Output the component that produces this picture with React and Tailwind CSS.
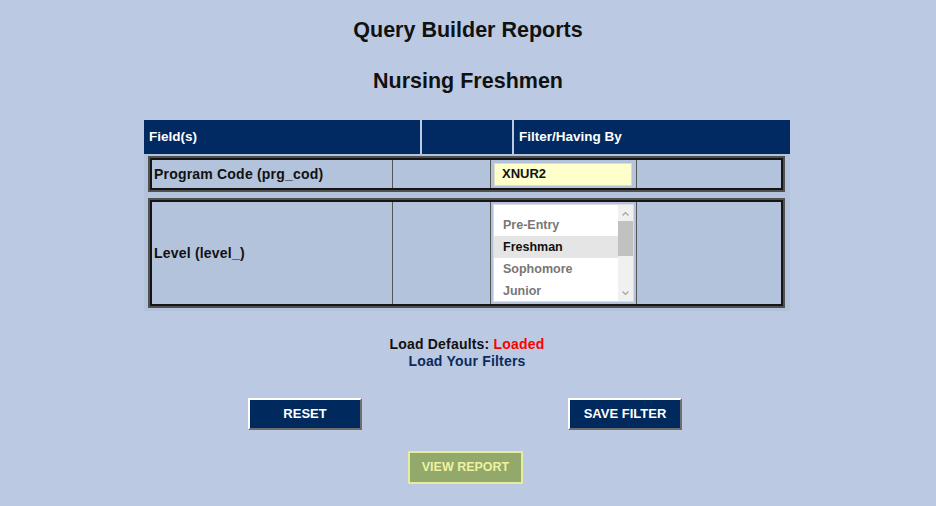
import React from "react";

const levels = ["Pre-Entry", "Freshman", "Sophomore", "Junior"];

const RowBox = ({ className, children }) => (
  <div className={`border-2 border-[#505050] ${className}`}>
    <div className="flex h-full border-2 border-[#151515]">{children}</div>
  </div>
);

const App = () => {
  return (
    <div className="min-h-screen bg-[#BBCAE2] font-['Liberation_Sans',Arial,sans-serif] text-[#111] pt-[18px]">
      <h1 className="text-center text-[21.5px] leading-[24px] font-bold">Query Builder Reports</h1>
      <h2 className="text-center text-[21.5px] leading-[24px] font-bold mt-[27px]">Nursing Freshmen</h2>

      {/* Query table */}
      <div className="w-[646px] ml-[144px] mt-[27px]">
        <div className="flex h-[34px] gap-[2px] text-white text-[13.5px] font-bold">
          <div className="w-[276px] bg-[#002A61] flex items-center pl-[5px]">Field(s)</div>
          <div className="w-[90px] bg-[#002A61]"></div>
          <div className="flex-1 bg-[#002A61] flex items-center pl-[5px]">Filter/Having By</div>
        </div>

        <div className="bg-[#B3C3DC] pl-[4px] pr-[5px] pt-[2px] pb-[3px] flex flex-col gap-[6px] font-bold">
          <RowBox className="h-[36px]">
            <div className="w-[241px] border-r border-[#555] flex items-center pl-[2px] text-[14px] tracking-[0.2px]">Program Code (prg_cod)</div>
            <div className="w-[98px] border-r border-[#555]"></div>
            <div className="w-[146px] border-r border-[#555] flex items-center pl-[3px] text-[13px]">
              <div className="w-[138px] h-[23px] bg-[#FFFFCC] border border-[#dedcc4] flex items-center pl-[7px]">XNUR2</div>
            </div>
            <div className="flex-1"></div>
          </RowBox>

          <RowBox className="h-[110px]">
            <div className="w-[241px] border-r border-[#555] flex items-center pl-[2px] text-[14px] tracking-[0.2px]">Level (level_)</div>
            <div className="w-[98px] border-r border-[#555]"></div>
            <div className="w-[146px] border-r border-[#555] flex items-center pl-[2px] text-[12.5px]">
              <div className="w-[141px] h-[98px] bg-white border border-[#dcdcdc] flex">
                <div className="flex-1 pt-[9px]">
                  {levels.map((l) => (
                    <div
                      key={l}
                      className={`h-[22px] flex items-center pl-[9px] ${l === "Freshman" ? "bg-[#E5E5E5] text-[#111]" : "text-[#777]"}`}
                    >
                      {l}
                    </div>
                  ))}
                </div>
                <div className="w-[15px] bg-[#F0F0F0] flex flex-col items-center">
                  <svg width="9" height="14" viewBox="0 0 9 14" className="mt-[2px]">
                    <path d="M1.5 8.5 L4.5 5.5 L7.5 8.5" fill="none" stroke="#a3a3a3" strokeWidth="1.2" />
                  </svg>
                  <div className="w-[15px] h-[35px] bg-[#C1C1C1]"></div>
                  <div className="flex-1"></div>
                  <svg width="9" height="14" viewBox="0 0 9 14" className="mb-[1px]">
                    <path d="M1.5 5.5 L4.5 8.5 L7.5 5.5" fill="none" stroke="#a3a3a3" strokeWidth="1.2" />
                  </svg>
                </div>
              </div>
            </div>
            <div className="flex-1"></div>
          </RowBox>
        </div>

        {/* Defaults */}
        <div className="mt-[25px] text-center text-[14px] leading-[17px] font-bold tracking-[0.2px]">
          <div>
            Load Defaults: <span className="text-[#FF0000]">Loaded</span>
          </div>
          <div className="text-[#0B2A5E]">Load Your Filters</div>
        </div>

        {/* Buttons */}
        <div className="flex mt-[28px]">
          <button className="ml-[104px] w-[114px] h-[32px] bg-[#00295E] text-white text-[13px] font-bold border-2 border-t-white border-l-white border-b-[#6f6f6f] border-r-[#6f6f6f]">
            RESET
          </button>
          <button className="ml-[206px] w-[114px] h-[32px] bg-[#00295E] text-white text-[13px] font-bold border-2 border-t-white border-l-white border-b-[#6f6f6f] border-r-[#6f6f6f]">
            SAVE FILTER
          </button>
        </div>

        <div className="flex mt-[21px]">
          <button className="ml-[264px] w-[115px] h-[33px] bg-[#93A86B] text-[#EEF2A2] text-[12.5px] font-bold border-2 border-[#E4EC9E]">
            VIEW REPORT
          </button>
        </div>
      </div>
    </div>
  );
};

export default App;
